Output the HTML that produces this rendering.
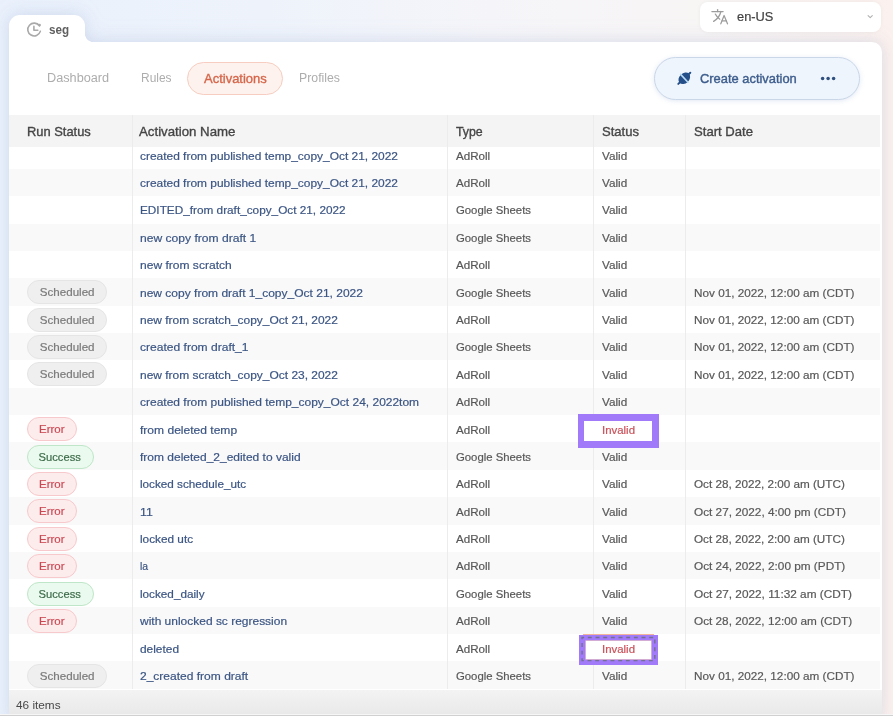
<!DOCTYPE html>
<html><head><meta charset="utf-8"><title>Activations</title>
<style>
*{box-sizing:border-box;margin:0;padding:0}
html,body{width:893px;height:716px;overflow:hidden}
body{font-family:"Liberation Sans",sans-serif;position:relative;
background:linear-gradient(90deg,#eaf1fc 0%,#eef3fb 30%,#f5f5f9 55%,#f8f5f5 78%,#fbf1ee 100%);}
.abs{position:absolute}
#shell{position:absolute;left:0;top:0;width:893px;height:716px;filter:drop-shadow(0 0 7px rgba(105,125,165,.13)) drop-shadow(0 -3px 10px rgba(110,140,210,.09))}
#tab{left:8.5px;top:15px;width:76px;height:40px;background:#fff;border-radius:11px 11px 0 0}
#tabcurve{left:84.5px;top:34px;width:8px;height:8px;background:radial-gradient(circle at 100% 0,rgba(255,255,255,0) 7.6px,#fff 8.2px)}
#card{left:8.5px;top:42.3px;width:873.6px;height:680px;background:#fff;border-radius:0 10px 0 0}
#cardtop{left:8.5px;top:42.3px;width:200px;height:20px;background:#fff}
#lang{left:699.5px;top:1.5px;width:181.5px;height:30.3px;background:#fff;border-radius:8px;box-shadow:0 0 4px rgba(0,0,0,.05)}
.t{position:absolute;white-space:nowrap;line-height:1;transform-origin:0 50%}
#thead{left:8.5px;top:115px;width:871.2px;height:32.3px;background:#f4f4f4}
.row{position:absolute;left:8.5px;width:871.2px}
.row.g{background:#f9f9f9}
.vline{position:absolute;top:115px;width:1px;height:573.7px;background:#ececec}
#foot{left:8.5px;top:690px;width:873.6px;height:23.6px;background:linear-gradient(#f3f3f3,#e9e9e9)}
#bline{left:0;top:713.5px;width:893px;height:2.5px;background:linear-gradient(#f6f6f6 0,#f6f6f6 36%,#cccccc 48%,#d4d4d4 100%)}
.hd{font-size:13px;color:#454545;top:124.7px;-webkit-text-stroke:.35px #454545}
.c{font-size:11.7px;color:#585858;-webkit-text-stroke:.2px}
.n{color:#3b5583}
.inv{color:#c9525a}
.pill{position:absolute;left:26.8px;height:24px;border-radius:12px;font-size:11.5px;line-height:22.8px;text-align:center;border:1px solid;-webkit-text-stroke:.2px}
.pill span{display:inline-block;transform-origin:50% 50%}
.sch{width:80px;background:#efefef;border-color:#e5e5e5;color:#7a7a7a}
.err{width:50.3px;background:#fdecec;border-color:#f8c9cc;color:#c94a55}
.suc{width:66.8px;background:#eafaee;border-color:#bfe6c8;color:#3d6b4a}
.nav{font-size:12.5px;color:#adadad;top:72.3px}
#act{left:187.4px;top:61.8px;width:95.4px;height:32.8px;border-radius:16.4px;background:#fef2ee;border:1px solid #f6cdc0}
#create{left:654px;top:56.5px;width:206px;height:43.8px;border-radius:22px;background:#eff5fc;border:1px solid #cad7e9;box-shadow:0 1px 5px rgba(120,150,200,.22)}
.hlb{background:#a07af8}
.hli{background:#fff}
svg{position:absolute;overflow:visible}

#wrap{will-change:transform;position:absolute;left:0;top:0;width:893px;height:716px;filter:blur(.4px)}

</style></head><body><div id="wrap">
<div id="shell"><div class="abs" id="tab"></div>
<div class="abs" id="card"></div>
<div class="abs" id="tabcurve"></div></div>
<div class="abs" id="lang"></div>
<svg style="left:0;top:0" width="893" height="110" viewBox="0 0 893 110" fill="none">
<!-- clock -->
<path d="M40.32 31.37 A6.4 6.4 0 1 1 39.44 25.83" stroke="#a9a9a9" stroke-width="1.6" stroke-linecap="round"/>
<circle cx="39.6" cy="25.1" r="1.3" fill="#a9a9a9"/>
<path d="M33.9 26.4V30.2H37.8" stroke="#a9a9a9" stroke-width="1.6" stroke-linecap="round" stroke-linejoin="round"/>
<!-- translate -->
<g stroke="#9c9c9c" stroke-width="1.25" stroke-linecap="round" stroke-linejoin="round">
<path d="M711.9 11.5H723.1"/><path d="M717.6 9.6V11.5"/>
<path d="M720.9 11.5C720 15.5 717 19.3 713.6 21.4"/>
<path d="M715.3 14.1C716.2 16 717.8 17.8 719.8 19.2"/>
<path d="M720.8 23.8L724.1 15.5L727.5 23.8"/><path d="M722 20.9H726.3"/>
</g>
<!-- chevron -->
<path d="M868.1 15.6L870.2 17.6L872.3 15.6" stroke="#b0b0b0" stroke-width="1.1" stroke-linecap="round" stroke-linejoin="round"/>
</svg>
<div class="t" style="transform:scaleX(0.9875);left:736.6px;top:10.2px;font-size:13px;color:#424242;-webkit-text-stroke:.2px">en-US</div>
<div class="t" style="transform:scaleX(0.9328);left:49px;top:23.6px;font-size:12.5px;font-weight:bold;color:#606060">seg</div>
<div class="t nav" style="transform:scaleX(1.0154);left:46.6px">Dashboard</div>
<div class="t nav" style="transform:scaleX(0.9572);left:140.9px">Rules</div>
<div class="abs" id="act"></div>
<div class="t" style="transform:scaleX(0.9988);left:203.7px;top:71.6px;font-size:13px;color:#d5664a;-webkit-text-stroke:.35px #d5664a">Activations</div>
<div class="t nav" style="transform:scaleX(0.9835);left:298.7px">Profiles</div>
<div class="abs" id="create"></div>
<svg style="left:0;top:0" width="893" height="110" viewBox="0 0 893 110" fill="none">
<g transform="translate(684.3 78.3) rotate(-43)"><ellipse rx="6.5" ry="5" fill="#244f88"/><rect x="-9.2" y="-1" width="18.4" height="2" rx="1" fill="#244f88"/><rect x="-0.8" y="-6" width="1.6" height="12" fill="#b9dbf7"/></g>
<circle cx="822.6" cy="78.6" r="1.75" fill="#2f4f7f"/><circle cx="828.1" cy="78.6" r="1.75" fill="#2f4f7f"/><circle cx="833.6" cy="78.6" r="1.75" fill="#2f4f7f"/>
</svg>
<div class="t" style="transform:scaleX(0.9922);left:699.6px;top:71.8px;font-size:13px;color:#3d5d8d;-webkit-text-stroke:.4px #3d5d8d">Create activation</div>
<div class="abs" id="thead"></div>

<div class="row" style="top:147.30px;height:21.56px"></div>
<div class="row g" style="top:168.86px;height:27.36px"></div>
<div class="row" style="top:196.22px;height:27.36px"></div>
<div class="row g" style="top:223.58px;height:27.36px"></div>
<div class="row" style="top:250.94px;height:27.36px"></div>
<div class="row g" style="top:278.30px;height:27.36px"></div>
<div class="row" style="top:305.66px;height:27.36px"></div>
<div class="row g" style="top:333.02px;height:27.36px"></div>
<div class="row" style="top:360.38px;height:27.36px"></div>
<div class="row g" style="top:387.74px;height:27.36px"></div>
<div class="row" style="top:415.10px;height:27.36px"></div>
<div class="row g" style="top:442.46px;height:27.36px"></div>
<div class="row" style="top:469.82px;height:27.36px"></div>
<div class="row g" style="top:497.18px;height:27.36px"></div>
<div class="row" style="top:524.54px;height:27.36px"></div>
<div class="row g" style="top:551.90px;height:27.36px"></div>
<div class="row" style="top:579.26px;height:27.36px"></div>
<div class="row g" style="top:606.62px;height:27.36px"></div>
<div class="row" style="top:633.98px;height:27.36px"></div>
<div class="row g" style="top:661.34px;height:27.36px"></div>
<div class="vline" style="left:131.7px"></div>
<div class="vline" style="left:446.8px"></div>
<div class="vline" style="left:593.4px"></div>
<div class="vline" style="left:685.1px"></div>
<div class="t hd" style="transform:scaleX(0.9918);left:26.8px">Run Status</div>
<div class="t hd" style="transform:scaleX(1.0184);left:139.3px">Activation Name</div>
<div class="t hd" style="transform:scaleX(0.9472);left:455.8px">Type</div>
<div class="t hd" style="transform:scaleX(1.0038);left:601.8px">Status</div>
<div class="t hd" style="transform:scaleX(1.0080);left:693.8px">Start Date</div>
<div class="abs" style="left:582.9px;top:633.8px;width:71.2px;height:1.4px;background:#f3b39b"></div>
<div class="abs hlb" style="left:577.8px;top:414px;width:81.2px;height:33.8px"></div>
<div class="abs hli" style="left:584px;top:420.7px;width:68.3px;height:20.7px"></div>
<div class="abs hlb" style="left:579.2px;top:634.9px;width:78.9px;height:29.9px"></div>
<div class="abs hli" style="left:585.9px;top:641.2px;width:65.6px;height:17.4px;box-shadow:0 0 0 .6px #f6cdbd"></div>
<svg style="left:0;top:620px" width="893" height="60" viewBox="0 620 893 60" fill="none">
<rect x="582.1" y="637.5" width="72.7" height="23.1" stroke="#6d7086" stroke-opacity=".9" stroke-width="1.4" stroke-dasharray="3.9 3.77" stroke-dashoffset="1.9"/>
</svg>

<div class="t c n" style="transform:scaleX(1.0208);left:139.7px;top:149.60px">created from published temp_copy_Oct 21, 2022</div>
<div class="t c" style="transform:scaleX(0.9931);left:456.2px;top:149.60px">AdRoll</div>
<div class="t c" style="transform:scaleX(1.0030);left:602.3px;top:149.60px">Valid</div>
<div class="t c n" style="transform:scaleX(1.0208);left:139.7px;top:176.99px">created from published temp_copy_Oct 21, 2022</div>
<div class="t c" style="transform:scaleX(0.9931);left:456.2px;top:176.99px">AdRoll</div>
<div class="t c" style="transform:scaleX(1.0030);left:602.3px;top:176.99px">Valid</div>
<div class="t c n" style="transform:scaleX(1.0079);left:139.7px;top:204.38px">EDITED_from draft_copy_Oct 21, 2022</div>
<div class="t c" style="transform:scaleX(0.9699);left:456.2px;top:204.38px">Google Sheets</div>
<div class="t c" style="transform:scaleX(1.0030);left:602.3px;top:204.38px">Valid</div>
<div class="t c n" style="transform:scaleX(1.0339);left:139.7px;top:231.77px">new copy from draft 1</div>
<div class="t c" style="transform:scaleX(0.9699);left:456.2px;top:231.77px">Google Sheets</div>
<div class="t c" style="transform:scaleX(1.0030);left:602.3px;top:231.77px">Valid</div>
<div class="t c n" style="transform:scaleX(1.0305);left:139.7px;top:259.16px">new from scratch</div>
<div class="t c" style="transform:scaleX(0.9931);left:456.2px;top:259.16px">AdRoll</div>
<div class="t c" style="transform:scaleX(1.0030);left:602.3px;top:259.16px">Valid</div>
<div class="pill sch" style="top:280.10px"><span style="transform:scaleX(1.0081)">Scheduled</span></div>
<div class="t c n" style="transform:scaleX(1.0276);left:139.7px;top:286.55px">new copy from draft 1_copy_Oct 21, 2022</div>
<div class="t c" style="transform:scaleX(0.9699);left:456.2px;top:286.55px">Google Sheets</div>
<div class="t c" style="transform:scaleX(1.0030);left:602.3px;top:286.55px">Valid</div>
<div class="t c" style="transform:scaleX(1.0043);left:693.7px;top:286.55px">Nov 01, 2022, 12:00 am (CDT)</div>
<div class="pill sch" style="top:307.50px"><span style="transform:scaleX(1.0081)">Scheduled</span></div>
<div class="t c n" style="transform:scaleX(1.0222);left:139.7px;top:313.94px">new from scratch_copy_Oct 21, 2022</div>
<div class="t c" style="transform:scaleX(0.9931);left:456.2px;top:313.94px">AdRoll</div>
<div class="t c" style="transform:scaleX(1.0030);left:602.3px;top:313.94px">Valid</div>
<div class="t c" style="transform:scaleX(1.0043);left:693.7px;top:313.94px">Nov 01, 2022, 12:00 am (CDT)</div>
<div class="pill sch" style="top:334.90px"><span style="transform:scaleX(1.0081)">Scheduled</span></div>
<div class="t c n" style="transform:scaleX(1.0309);left:139.7px;top:341.33px">created from draft_1</div>
<div class="t c" style="transform:scaleX(0.9699);left:456.2px;top:341.33px">Google Sheets</div>
<div class="t c" style="transform:scaleX(1.0030);left:602.3px;top:341.33px">Valid</div>
<div class="t c" style="transform:scaleX(1.0043);left:693.7px;top:341.33px">Nov 01, 2022, 12:00 am (CDT)</div>
<div class="pill sch" style="top:362.30px"><span style="transform:scaleX(1.0081)">Scheduled</span></div>
<div class="t c n" style="transform:scaleX(1.0222);left:139.7px;top:368.72px">new from scratch_copy_Oct 23, 2022</div>
<div class="t c" style="transform:scaleX(0.9931);left:456.2px;top:368.72px">AdRoll</div>
<div class="t c" style="transform:scaleX(1.0030);left:602.3px;top:368.72px">Valid</div>
<div class="t c" style="transform:scaleX(1.0043);left:693.7px;top:368.72px">Nov 01, 2022, 12:00 am (CDT)</div>
<div class="t c n" style="transform:scaleX(1.0253);left:139.7px;top:396.11px">created from published temp_copy_Oct 24, 2022tom</div>
<div class="t c" style="transform:scaleX(0.9931);left:456.2px;top:396.11px">AdRoll</div>
<div class="t c" style="transform:scaleX(1.0030);left:602.3px;top:396.11px">Valid</div>
<div class="pill err" style="top:417.10px"><span style="transform:scaleX(0.9976)">Error</span></div>
<div class="t c n" style="transform:scaleX(1.0308);left:139.7px;top:423.50px">from deleted temp</div>
<div class="t c" style="transform:scaleX(0.9931);left:456.2px;top:423.50px">AdRoll</div>
<div class="t c inv" style="transform:scaleX(0.9764);left:602.3px;top:423.50px">Invalid</div>
<div class="pill suc" style="top:444.50px"><span style="transform:scaleX(0.9731)">Success</span></div>
<div class="t c n" style="transform:scaleX(1.0256);left:139.7px;top:450.89px">from deleted_2_edited to valid</div>
<div class="t c" style="transform:scaleX(0.9699);left:456.2px;top:450.89px">Google Sheets</div>
<div class="t c" style="transform:scaleX(1.0030);left:602.3px;top:450.89px">Valid</div>
<div class="pill err" style="top:471.90px"><span style="transform:scaleX(0.9976)">Error</span></div>
<div class="t c n" style="transform:scaleX(1.0017);left:139.7px;top:478.28px">locked schedule_utc</div>
<div class="t c" style="transform:scaleX(0.9931);left:456.2px;top:478.28px">AdRoll</div>
<div class="t c" style="transform:scaleX(1.0030);left:602.3px;top:478.28px">Valid</div>
<div class="t c" style="transform:scaleX(1.0006);left:693.7px;top:478.28px">Oct 28, 2022, 2:00 am (UTC)</div>
<div class="pill err" style="top:499.30px"><span style="transform:scaleX(0.9976)">Error</span></div>
<div class="t c n" style="transform:scaleX(1.0543);left:139.7px;top:505.67px">11</div>
<div class="t c" style="transform:scaleX(0.9931);left:456.2px;top:505.67px">AdRoll</div>
<div class="t c" style="transform:scaleX(1.0030);left:602.3px;top:505.67px">Valid</div>
<div class="t c" style="transform:scaleX(1.0073);left:693.7px;top:505.67px">Oct 27, 2022, 4:00 pm (CDT)</div>
<div class="pill err" style="top:526.70px"><span style="transform:scaleX(0.9976)">Error</span></div>
<div class="t c n" style="transform:scaleX(1.0090);left:139.7px;top:533.06px">locked utc</div>
<div class="t c" style="transform:scaleX(0.9931);left:456.2px;top:533.06px">AdRoll</div>
<div class="t c" style="transform:scaleX(1.0030);left:602.3px;top:533.06px">Valid</div>
<div class="t c" style="transform:scaleX(1.0006);left:693.7px;top:533.06px">Oct 28, 2022, 2:00 am (UTC)</div>
<div class="pill err" style="top:554.10px"><span style="transform:scaleX(0.9976)">Error</span></div>
<div class="t c n" style="transform:scaleX(0.8892);left:139.7px;top:560.45px">la</div>
<div class="t c" style="transform:scaleX(0.9931);left:456.2px;top:560.45px">AdRoll</div>
<div class="t c" style="transform:scaleX(1.0030);left:602.3px;top:560.45px">Valid</div>
<div class="t c" style="transform:scaleX(1.0082);left:693.7px;top:560.45px">Oct 24, 2022, 2:00 pm (PDT)</div>
<div class="pill suc" style="top:581.50px"><span style="transform:scaleX(0.9731)">Success</span></div>
<div class="t c n" style="transform:scaleX(1.0027);left:139.7px;top:587.84px">locked_daily</div>
<div class="t c" style="transform:scaleX(0.9699);left:456.2px;top:587.84px">Google Sheets</div>
<div class="t c" style="transform:scaleX(1.0030);left:602.3px;top:587.84px">Valid</div>
<div class="t c" style="transform:scaleX(1.0100);left:693.7px;top:587.84px">Oct 27, 2022, 11:32 am (CDT)</div>
<div class="pill err" style="top:608.90px"><span style="transform:scaleX(0.9976)">Error</span></div>
<div class="t c n" style="transform:scaleX(1.0245);left:139.7px;top:615.23px">with unlocked sc regression</div>
<div class="t c" style="transform:scaleX(0.9931);left:456.2px;top:615.23px">AdRoll</div>
<div class="t c" style="transform:scaleX(1.0030);left:602.3px;top:615.23px">Valid</div>
<div class="t c" style="transform:scaleX(1.0063);left:693.7px;top:615.23px">Oct 28, 2022, 12:00 am (CDT)</div>
<div class="t c n" style="transform:scaleX(1.0167);left:139.7px;top:642.62px">deleted</div>
<div class="t c" style="transform:scaleX(0.9931);left:456.2px;top:642.62px">AdRoll</div>
<div class="t c inv" style="transform:scaleX(0.9764);left:602.3px;top:642.62px">Invalid</div>
<div class="pill sch" style="top:663.70px"><span style="transform:scaleX(1.0081)">Scheduled</span></div>
<div class="t c n" style="transform:scaleX(1.0280);left:139.7px;top:670.01px">2_created from draft</div>
<div class="t c" style="transform:scaleX(0.9699);left:456.2px;top:670.01px">Google Sheets</div>
<div class="t c" style="transform:scaleX(1.0030);left:602.3px;top:670.01px">Valid</div>
<div class="t c" style="transform:scaleX(1.0043);left:693.7px;top:670.01px">Nov 01, 2022, 12:00 am (CDT)</div>
<div class="abs" id="foot"></div>
<div class="t" style="transform:scaleX(1.0176);left:16.2px;top:699.4px;font-size:11.6px;color:#484848">46 items</div>
<div class="abs" id="bline"></div>

</div></body></html>
